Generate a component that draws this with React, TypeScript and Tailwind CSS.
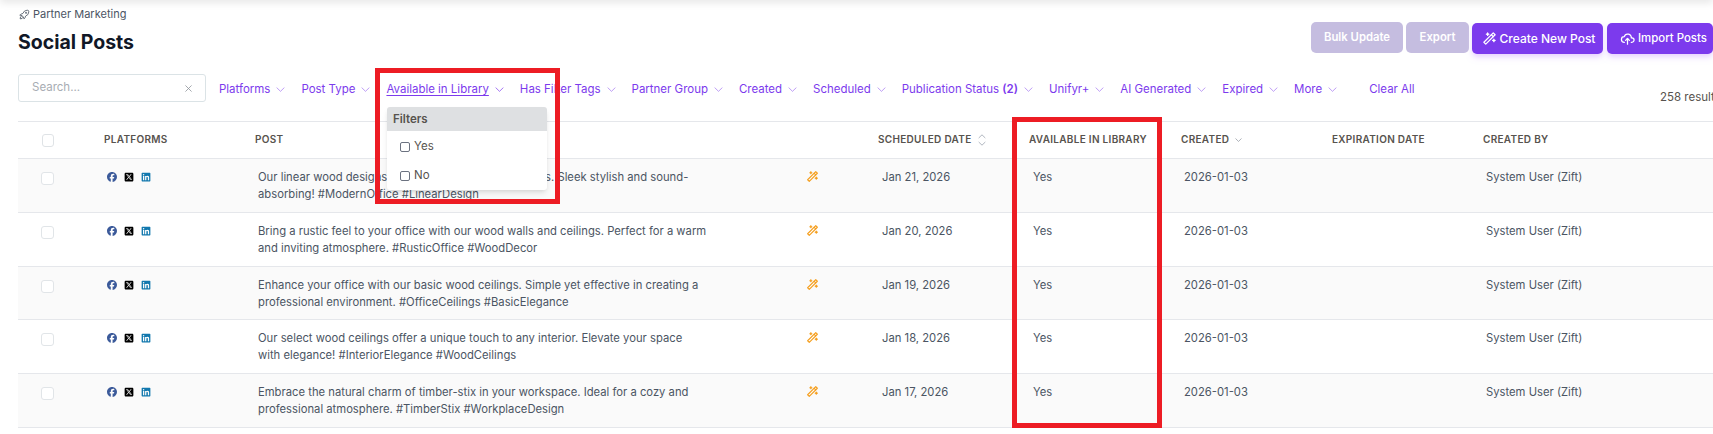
import { TbCloudUpload, TbRocket, TbWand } from "react-icons/tb";
import { FaFacebook, FaLinkedin, FaSquareXTwitter } from "react-icons/fa6";

const filters = [
  "Platforms",
  "Post Type",
  "Available in Library",
  "Has Filter Tags",
  "Partner Group",
  "Created",
  "Scheduled",
  "Publication Status",
  "Unifyr+",
  "AI Generated",
  "Expired",
  "More",
];

const posts = [
  {
    text: "Our linear wood designs add modern warmth to offices. Sleek stylish and sound-absorbing! #ModernOffice #LinearDesign",
    date: "Jan 21, 2026",
  },
  {
    text: "Bring a rustic feel to your office with our wood walls and ceilings. Perfect for a warm and inviting atmosphere. #RusticOffice #WoodDecor",
    date: "Jan 20, 2026",
  },
  {
    text: "Enhance your office with our basic wood ceilings. Simple yet effective in creating a professional environment. #OfficeCeilings #BasicElegance",
    date: "Jan 19, 2026",
  },
  {
    text: "Our select wood ceilings offer a unique touch to any interior. Elevate your space with\u00A0elegance! #InteriorElegance #WoodCeilings",
    date: "Jan 18, 2026",
  },
  {
    text: "Embrace the natural charm of timber-stix in your workspace. Ideal for a cozy and professional atmosphere. #TimberStix #WorkplaceDesign",
    date: "Jan 17, 2026",
  },
];

const gridCols = "grid grid-cols-[86px_151px_623px_151px_152px_151px_151px_1fr]";

function Chevron({ className = "w-[9px] h-[5px]" }: { className?: string }) {
  return (
    <svg viewBox="0 0 10 6" fill="none" stroke="currentColor" strokeWidth="0.8" preserveAspectRatio="none" className={`shrink-0 ${className}`}>
      <path d="M0.7 0.7 5 5.2 9.3 0.7" />
    </svg>
  );
}

function HeaderCell({ children }: { children: React.ReactNode }) {
  return (
    <div className="flex items-center gap-[6px] pb-[1px] text-[10px] font-semibold tracking-[0.3px] uppercase text-[#57534e]">
      {children}
    </div>
  );
}

export default function App() {
  return (
    <div className="relative w-[1713px] h-[434px] overflow-hidden bg-white font-['Inter',sans-serif]">
      {/* top bar shadow */}
      <div className="absolute top-[-8px] left-0 right-0 h-[8px] shadow-[0_2px_8px_rgba(0,0,0,0.12)]" />

      {/* Title + actions */}
      <div className="flex h-[74px]">
        <div className="pl-[18px] pt-[7px]">
          <div className="flex items-center gap-[2px] h-[14px] text-[11px] text-[#4b5563]">
            <TbRocket className="w-[13px] h-[13px]" strokeWidth={1.5} />
            Partner Marketing
          </div>
          <h1 className="mt-[7px] text-[19.5px] leading-[28px] font-bold text-[#111827]">Social Posts</h1>
        </div>
        <div className="ml-auto flex items-start gap-[3px] pt-[22px] text-[11.3px] font-semibold text-white">
          <button className="w-[92px] h-[31px] rounded-[5px] bg-[#c5bde0]">Bulk Update</button>
          <button className="w-[63px] h-[31px] rounded-[5px] bg-[#c5bde0]">Export</button>
          <button className="flex items-center justify-center gap-[3px] pl-[2px] w-[131px] h-[31px] mt-[1px] rounded-[5px] bg-[#7c3aed] shadow-md shadow-purple-200 text-[12px] font-medium">
            <TbWand className="w-[15px] h-[15px]" />
            Create New Post
          </button>
          <button className="flex items-center gap-[3px] pl-[13px] w-[106px] h-[31px] mt-[1px] ml-[1px] rounded-[5px] bg-[#7c3aed] shadow-md shadow-purple-200 text-[11.4px] font-medium">
            <TbCloudUpload className="w-[15px] h-[15px]" />
            Import Posts
          </button>
        </div>
      </div>

      {/* Filters */}
      <div className="flex items-start h-[47px] pl-[18px] whitespace-nowrap">
        <div className="flex items-center justify-between w-[188px] h-[28px] shrink-0 pl-[13px] pr-[13px] rounded-[3px] border border-[#dbe3e6] text-[11.5px] text-[#a8adb3]">
          Search...
          <svg viewBox="0 0 8 8" stroke="#8d9399" strokeWidth="0.9" className="w-[7px] h-[7px]">
            <path d="M0.5 0.5 7.5 7.5M7.5 0.5 0.5 7.5" />
          </svg>
        </div>
        <div className="flex items-center h-[31px] gap-[16px] ml-[13px] text-[11.48px] text-[#7c3aed]">
          {filters.map((f) => (
            <div key={f} className="flex items-center gap-[6px]">
              {f === "Available in Library" ? (
                <span className="underline underline-offset-2">{f}</span>
              ) : f === "Publication Status" ? (
                <span>
                  {f} <b className="font-semibold">(2)</b>
                </span>
              ) : (
                <span>{f}</span>
              )}
              <Chevron className={f === "Available in Library" ? "w-[9px] h-[5px]" : "w-[9px] h-[5px] opacity-70"} />
            </div>
          ))}
          <span className="ml-[16px]">Clear All</span>
        </div>
        <span className="ml-auto pt-[15px] text-[11.5px] text-[#57534e] w-[53px]">258 results</span>
      </div>

      {/* Table */}
      <div className="ml-[18px] border-t border-[#e5e7eb]">
        <div className={`${gridCols} h-[37px] border-b border-[#e5e7eb] items-center`}>
          <div className="pl-[24px]">
            <div className="w-[12px] h-[13px] rounded-[3px] border border-[#dfe3e6]" />
          </div>
          <HeaderCell>Platforms</HeaderCell>
          <HeaderCell>Post</HeaderCell>
          <HeaderCell>
            Scheduled Date
            <svg viewBox="0 0 8 12" fill="none" stroke="#9ca3af" strokeWidth="0.8" className="w-[8px] h-[12px]">
              <path d="M0.7 4 4 0.8 7.3 4M0.7 8 4 11.2 7.3 8" />
            </svg>
          </HeaderCell>
          <HeaderCell>Available in Library</HeaderCell>
          <HeaderCell>
            Created
            <Chevron className="w-[7px] h-[4px] text-[#6b7280]" />
          </HeaderCell>
          <HeaderCell>Expiration Date</HeaderCell>
          <HeaderCell>Created By</HeaderCell>
        </div>

        {posts.map((p, i) => (
          <div
            key={p.date}
            className={`${gridCols} h-[53.75px] border-b border-[#e5e7eb] pt-[10px] text-[11.25px] leading-[17px] text-[#4b5563] ${
              i % 2 === 0 ? "bg-[#fafafa]" : "bg-white"
            }`}
          >
            <div className="pl-[23px] pt-[3px]">
              <div className="w-[13px] h-[13px] rounded-[3px] border border-[#e1e5e8] bg-white" />
            </div>
            <div className="flex items-start gap-[7px] pl-[3px] pt-[3px]">
              <FaFacebook className="w-[10px] h-[10px] text-[#3b5a9a]" />
              <FaSquareXTwitter className="w-[10px] h-[10px] text-black" />
              <FaLinkedin className="w-[10px] h-[10px] text-[#1278ae]" />
            </div>
            <div className="flex items-start pl-[3px]">
              <p className="w-[450px] shrink-0">{p.text}</p>
              <TbWand className="ml-[98px] mt-[1px] w-[13px] h-[13px] text-[#f59e1c]" />
            </div>
            <div className="pl-[4px]">{p.date}</div>
            <div className="pl-[4px]">Yes</div>
            <div className="pl-[3px]">2026-01-03</div>
            <div />
            <div className="pl-[3px]">System User (Zift)</div>
          </div>
        ))}
      </div>

      {/* Open filter dropdown */}
      <div className="absolute left-[387px] top-[107px] w-[160px] h-[83px] rounded-[3px] bg-white shadow-md overflow-hidden text-[11.5px] text-[#57534e]">
        <div className="h-[24px] pl-[6px] bg-[#dee0e2] font-semibold leading-[25px]">Filters</div>
        <label className="flex items-center gap-[4px] pl-[13px] h-[31px]">
          <span className="w-[10px] h-[10px] rounded-[2px] border border-[#6b7280]" />
          Yes
        </label>
        <label className="flex items-center gap-[4px] pl-[13px] h-[28px]">
          <span className="w-[10px] h-[10px] rounded-[2px] border border-[#6b7280]" />
          No
        </label>
      </div>

      {/* Red annotation frames */}
      <div className="absolute left-[375px] top-[68px] w-[185px] h-[136px] border-[5px] border-[#ed1c24]" />
      <div className="absolute left-[1012px] top-[117px] w-[150px] h-[311px] border-[5px] border-[#ed1c24]" />
    </div>
  );
}
